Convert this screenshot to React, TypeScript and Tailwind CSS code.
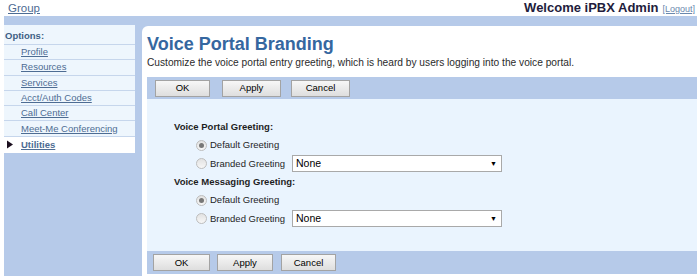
import React from "react";

const font = { fontFamily: '"Liberation Sans", Arial, sans-serif' };

function Btn({ label, w, ml }: { label: string; w: string; ml: string }) {
  return (
    <div
      className={`${w} ${ml} h-[17px] flex items-center justify-center border border-[#a3a3a3] bg-gradient-to-b from-[#f7f7f7] to-[#dedede] text-[9.5px] text-black leading-none`}
    >
      {label}
    </div>
  );
}

function Radio({ checked }: { checked?: boolean }) {
  return (
    <span className="w-[11px] h-[11px] rounded-full border border-[#bdbdbd] bg-gradient-to-b from-[#e2e2e2] to-[#f7f7f7] flex items-center justify-center shrink-0">
      {checked && <span className="w-[5px] h-[5px] rounded-full bg-[#777777]" />}
    </span>
  );
}

function Select() {
  return (
    <div className="ml-[7px] w-[210px] h-[17px] bg-white border border-[#a9a9a9] flex items-center justify-between pl-[3px] pr-[4px]">
      <span className="text-[10.5px] text-black leading-none">None</span>
      <span className="text-[7px] text-black leading-none">▼</span>
    </div>
  );
}

const navItems = [
  "Profile",
  "Resources",
  "Services",
  "Acct/Auth Codes",
  "Call Center",
  "Meet-Me Conferencing",
];

export default function App() {
  return (
    <div className="w-[700px] h-[276px] bg-white overflow-hidden" style={font}>
      {/* header */}
      <div className="h-[16px] flex items-start justify-between pl-[8px] pr-[5px]">
        <a className="text-[11.5px] leading-[14px] mt-[1px] text-[#4d6c93] underline">Group</a>
        <div className="flex items-baseline mt-[1px]">
          <span className="text-[13px] font-bold leading-[14px] text-[#221c3c]">Welcome iPBX Admin</span>
          <a className="ml-[4px] text-[9px] text-[#6a88ad] underline">[Logout]</a>
        </div>
      </div>
      {/* body */}
      <div className="ml-[4px] mr-[3px] h-[260px] bg-[#b6cae9] pt-[9px] flex gap-[7px] items-start">
        {/* sidebar */}
        <div className="w-[131px] bg-[#eef6fd] text-[9.5px]">
          <div className="h-[20px] border-b border-[#c6d6ec] flex items-center pl-[1px] pt-[3px] font-bold text-[#3f5f84]">
            Options:
          </div>
          {navItems.map((n) => (
            <div
              key={n}
              className="h-[15.3px] border-b border-[#c6d6ec] flex items-center pl-[17px] text-[#4d6c93]"
            >
              <span className="underline">{n}</span>
            </div>
          ))}
          <div className="h-[16.3px] bg-white flex items-center pl-[2px] font-bold text-[#4d6c93]">
            <svg width="8" height="9" viewBox="0 0 8 9" className="mr-[7px]">
              <path d="M1 0.5 L7 4.5 L1 8.5 Z" fill="#1b0f1f" />
            </svg>
            <span className="underline">Utilities</span>
          </div>
        </div>
        {/* panel */}
        <div className="flex-1 h-[251px] mt-[1px] bg-white rounded-tl-[6px] pl-[5px] pt-[7px]">
          <div className="text-[18px] leading-[22px] font-bold text-[#3567a0]">Voice Portal Branding</div>
          <div className="mt-[2px] text-[10.2px] leading-[12px] text-[#2b2b2b]">
            Customize the voice portal entry greeting, which is heard by users logging into the voice portal.
          </div>
          <div className="mt-[8px] h-[22px] bg-[#b6cae9] flex items-center">
            <Btn label="OK" w="w-[55px]" ml="ml-[8px]" />
            <Btn label="Apply" w="w-[59px]" ml="ml-[12px]" />
            <Btn label="Cancel" w="w-[59px]" ml="ml-[10px]" />
          </div>
          <div className="h-[152px] bg-[#eaf4fe] pt-[19px] pl-[27px] text-[9.5px] text-[#1e1e1e]">
            <div className="h-[18.3px] flex items-center font-bold">Voice Portal Greeting:</div>
            <div className="h-[18.3px] flex items-center pl-[22px]">
              <Radio checked />
              <span className="ml-[3px]">Default Greeting</span>
            </div>
            <div className="h-[18.3px] flex items-center pl-[22px]">
              <Radio />
              <span className="ml-[3px]">Branded Greeting</span>
              <Select />
            </div>
            <div className="h-[18.3px] flex items-center font-bold">Voice Messaging Greeting:</div>
            <div className="h-[18.3px] flex items-center pl-[22px]">
              <Radio checked />
              <span className="ml-[3px]">Default Greeting</span>
            </div>
            <div className="h-[18.3px] flex items-center pl-[22px]">
              <Radio />
              <span className="ml-[3px]">Branded Greeting</span>
              <Select />
            </div>
          </div>
          <div className="h-[23px] bg-[#b6cae9] flex items-center">
            <Btn label="OK" w="w-[57px]" ml="ml-[6px]" />
            <Btn label="Apply" w="w-[56px]" ml="ml-[7px]" />
            <Btn label="Cancel" w="w-[55px]" ml="ml-[8px]" />
          </div>
        </div>
      </div>
    </div>
  );
}
